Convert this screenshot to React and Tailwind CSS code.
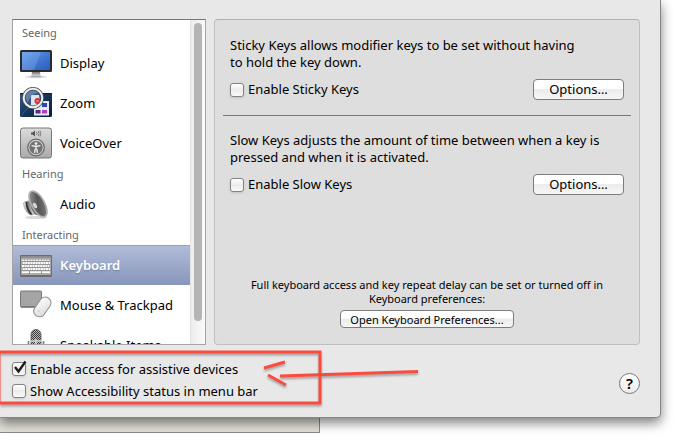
import { useState } from "react";

const DisplayIcon = () => (
  <svg viewBox="0 0 32 32" className="size-8">
    <defs>
      <linearGradient id="screen" x1="0" y1="0" x2="1" y2="1">
        <stop offset="0" stopColor="#5d9bf0" />
        <stop offset="1" stopColor="#2a5cb8" />
      </linearGradient>
      <linearGradient id="stand" x1="0" y1="0" x2="0" y2="1">
        <stop offset="0" stopColor="#777" />
        <stop offset="1" stopColor="#d8d8d8" />
      </linearGradient>
    </defs>
    <ellipse cx="16" cy="30" rx="11" ry="1.4" fill="#000" opacity=".12" />
    <path d="M12 25h8l.6 4h-9.2z" fill="url(#stand)" />
    <rect x="10.5" y="29" width="11" height="1.3" rx=".5" fill="#a5a5a5" />
    <rect x="0" y="3" width="32" height="22" rx="1.5" fill="#2b2b2d" />
    <rect x="2" y="5" width="28" height="18" fill="url(#screen)" />
    <path d="M2 5h19l-7 18H2z" fill="#fff" opacity=".13" />
  </svg>
);

const ZoomIcon = () => (
  <svg viewBox="0 0 32 32" className="size-8">
    <defs>
      <linearGradient id="desk" x1="0" y1="0" x2="1" y2="1">
        <stop offset="0" stopColor="#2e5d8c" />
        <stop offset=".5" stopColor="#14355c" />
        <stop offset="1" stopColor="#0b1e38" />
      </linearGradient>
    </defs>
    <rect x="0" y="6" width="32" height="24" rx="1.5" fill="url(#desk)" />
    <rect x="0" y="6" width="32" height="1.5" fill="#16202e" />
    <path d="M2 29c2-6 6-9 12-10" stroke="#3f7cae" strokeWidth="1" fill="none" opacity=".6" />
    <rect x="14" y="14" width="15" height="14.5" fill="#e8eaf0" />
    <rect x="22" y="16" width="5" height="4" fill="#2b46b5" />
    <rect x="15.500" y="23" width="5" height="3.5" fill="#5d2a8c" />
    <rect x="22" y="23" width="5" height="3.5" fill="#b03fc0" />
    <circle cx="13" cy="11" r="9" fill="#34557f" />
    <path d="M11 8h8l1 8-4 3h-5z" fill="#dfe5ee" />
    <path d="M5 11a8 8 0 0 1 14-5c-5 0-9 3-11 10z" fill="#7f9fc4" opacity=".6" />
    <circle cx="17.5" cy="14" r="3" fill="#d43434" />
    <path d="M16.5 13l2 2M18.5 13l-2 2" stroke="#f6b0a8" strokeWidth=".7" />
    <circle cx="13" cy="11" r="9.3" fill="none" stroke="#4b4f54" strokeWidth="3.4" />
    <circle cx="13" cy="11" r="9.3" fill="none" stroke="#eceeef" strokeWidth="2" />
  </svg>
);

const VoiceOverIcon = () => (
  <svg viewBox="0 0 32 32" className="size-8">
    <defs>
      <linearGradient id="plate" x1="0" y1="0" x2="0" y2="1">
        <stop offset="0" stopColor="#dcdcdc" />
        <stop offset="1" stopColor="#a9a9a9" />
      </linearGradient>
    </defs>
    <rect x=".5" y="1" width="31" height="30" rx="2.5" fill="url(#plate)" stroke="#777" />
    <path d="M11 5.5h1.500l2.500-2v6l-2.500-2H11z" fill="#555" />
    <path d="M16.5 5q1 1.500 0 3M18.200 4q1.800 2.500 0 5M19.900 3.500q2 3 0 6" stroke="#666" strokeWidth=".8" fill="none" />
    <circle cx="16" cy="20.5" r="8.3" fill="#d2d2d2" stroke="#666" strokeWidth="1.2" />
    <circle cx="16" cy="20.5" r="6.6" fill="#707070" />
    <circle cx="16" cy="16.6" r="1.4" fill="#eee" />
    <path d="M11.500 18.600l3.300.6h2.400l3.300-.6M16 19v3M14.500 25.800l.8-4M17.500 25.800l-.8-4" stroke="#eee" strokeWidth="1.400" fill="none" />
  </svg>
);

const AudioIcon = () => (
  <svg viewBox="0 0 32 32" className="size-8">
    <defs>
      <linearGradient id="cone" x1="0" y1="0" x2="1" y2="1">
        <stop offset="0" stopColor="#a5a5a5" />
        <stop offset=".5" stopColor="#555" />
        <stop offset="1" stopColor="#858585" />
      </linearGradient>
      <linearGradient id="magnet" x1="0" y1="0" x2="1" y2="0">
        <stop offset="0" stopColor="#f4f4f6" />
        <stop offset=".45" stopColor="#83838a" />
        <stop offset="1" stopColor="#dcdce0" />
      </linearGradient>
    </defs>
    <ellipse cx="16" cy="29.5" rx="11" ry="1.6" fill="#000" opacity=".15" />
    <path d="M3.5 15q2-2.500 6-2l5 13q-3 1.500-5 .5-5.500-4-6-11.500z" fill="url(#magnet)" stroke="#88888c" strokeWidth=".6" />
    <path d="M6.500 14q0 7 5 12.500" stroke="#2f2f34" strokeWidth="1.800" fill="none" />
    <path d="M9.500 12q.5 8 6 14.500l3 1-6-21z" fill="#4b4b4d" />
    <ellipse cx="18" cy="16" rx="6.5" ry="14.3" transform="rotate(-29 18 16)" fill="url(#cone)" stroke="#b0b0b0" strokeWidth="1.7" />
    <ellipse cx="15" cy="17.500" rx="1.800" ry="3" transform="rotate(-29 15 17.500)" fill="#d5d5d5" />
  </svg>
);

const KEY_ROWS = [13, 16, 19];

const KeyboardIcon = () => (
  <svg viewBox="0 0 32 32" className="size-8">
    <rect x="0" y="5" width="32" height="22" rx="1" fill="#6d6d6d" />
    <rect x="1" y="6" width="30" height="19" fill="#a9a9a9" />
    <rect x="1" y="6" width="30" height="2" fill="#8e8e8e" />
    <rect x="2" y="9" width="28" height="15" fill="#949494" />
    <path d="M2 10.200h28" stroke="#f2f2f2" strokeWidth="1.6" strokeDasharray="2.2 .6" />
    {KEY_ROWS.map((y) => (
      <path key={y} d={`M${2 + (y % 2) * 0.6} ${y}h27.4`} stroke="#fbfbfb" strokeWidth="2.2" strokeDasharray="2.1 .5" />
    ))}
    <path d="M2 22.300h7M10 22.300h11M22 22.300h8" stroke="#fbfbfb" strokeWidth="2" />
  </svg>
);

const MouseIcon = () => (
  <svg viewBox="0 0 32 32" className="size-8">
    <defs>
      <linearGradient id="mouse" x1="0" y1="0" x2="1" y2="1">
        <stop offset="0" stopColor="#fff" />
        <stop offset="1" stopColor="#d9d9d9" />
      </linearGradient>
    </defs>
    <rect x=".5" y="2" width="21" height="16" rx="1" fill="#a5a5a5" stroke="#777" />
    <path d="M1 18h20" stroke="#5f5f5f" />
    <rect x="16.5" y="7" width="11.5" height="21.5" rx="5.6" transform="rotate(35 22 18)" fill="url(#mouse)" stroke="#8c8c8c" />
    <circle cx="18.700" cy="22" r="1" fill="#c9d2dd" />
  </svg>
);

const MicIcon = () => (
  <svg viewBox="0 0 32 32" className="size-8">
    <defs>
      <pattern id="mesh" width="2" height="2" patternUnits="userSpaceOnUse">
        <rect width="2" height="2" fill="#3b3b3b" />
        <path d="M0 0h1v1H0zM1 1h1v1H1z" fill="#b8b8b8" />
      </pattern>
    </defs>
    <path d="M8.5 12v7q1 7 7.500 7t7.500-7v-7" fill="none" stroke="#7c7c7c" strokeWidth="1.6" />
    <rect x="11" y="0.500" width="10" height="20" rx="5" fill="url(#mesh)" stroke="#555" strokeWidth=".8" />
    <path d="M10 12h12M16 10v9" stroke="#d8d8d8" strokeWidth="1.6" />
    <path d="M16 26v4" stroke="#777" strokeWidth="2" />
  </svg>
);

const groups = [
  {
    title: "Seeing",
    items: [
      { name: "Display", Icon: DisplayIcon },
      { name: "Zoom", Icon: ZoomIcon },
      { name: "VoiceOver", Icon: VoiceOverIcon },
    ],
  },
  { title: "Hearing", items: [{ name: "Audio", Icon: AudioIcon }] },
  {
    title: "Interacting",
    items: [
      { name: "Keyboard", Icon: KeyboardIcon },
      { name: "Mouse & Trackpad", Icon: MouseIcon },
      { name: "Speakable Items", Icon: MicIcon },
    ],
  },
];

const Checkbox = ({ label, defaultChecked = false }) => {
  const [checked, setChecked] = useState(defaultChecked);

  return (
    <label className="flex items-center gap-1">
      <span className="relative size-[14px] shrink-0">
        <input
          type="checkbox"
          checked={checked}
          onChange={(e) => setChecked(e.target.checked)}
          className="block size-full appearance-none rounded-[3px] border border-[#838383] bg-linear-to-b from-white via-[#ececec] to-[#fafafa] shadow-sm"
        />
        {checked && (
          <svg viewBox="0 0 16 16" className="pointer-events-none absolute -top-0.5 left-0 size-4">
            <path d="M3 7l3.500 4.500L13.500 1.500" fill="none" stroke="#1c1c1c" strokeWidth="2.3" />
          </svg>
        )}
      </span>
      {label}
    </label>
  );
};

const PushButton = ({ children, className }) => (
  <button
    type="button"
    className={`rounded-[4px] border border-[#7d7d7d] bg-linear-to-b from-white from-45% via-[#ececec] via-50% to-[#f6f6f6] ${className}`}
  >
    {children}
  </button>
);

const KeySection = ({ text, option, className }) => (
  <section className={`px-[7px] ${className}`}>
    <p className="pr-4">{text}</p>
    <div className="mt-2 flex items-center justify-between">
      <Checkbox label={option} />
      <PushButton className="h-[21px] w-[91px]">Options…</PushButton>
    </div>
  </section>
);

const Sidebar = () => {
  const [selected, setSelected] = useState("Keyboard");

  return (
    <div className="flex w-[194px] shrink-0 border border-[#a5a5a5] border-t-[#777] bg-white">
      <nav className="min-w-0 flex-1 overflow-hidden pt-0.5">
        {groups.map((group) => (
          <div key={group.title}>
            <h2 className="px-[9px] text-[11px] leading-[21px] text-[#666]">{group.title}</h2>
            {group.items.map(({ name, Icon }) => (
              <button
                key={name}
                type="button"
                onClick={() => setSelected(name)}
                className={`flex h-10 w-full items-center gap-2 pl-[7px] whitespace-nowrap ${
                  selected === name
                    ? "border-t border-[#93a2c4] bg-linear-to-b from-[#b0bcd8] to-[#8796bb] font-semibold text-white text-shadow-sm"
                    : ""
                }`}
              >
                <Icon />
                {name}
              </button>
            ))}
          </div>
        ))}
      </nav>
      <div className="flex w-[15px] justify-center border-l border-[#e3e3e3] bg-linear-to-r from-[#ededed] to-[#fafafa] pt-[3px] pb-[23px]">
        <div className="w-2 rounded-full bg-[#b4b4b4]" />
      </div>
    </div>
  );
};

const App = () => {
  return (
    <div className="flex h-screen flex-col bg-white pb-[14px] font-['Noto_Sans','Lucida_Grande',sans-serif] text-[13px] leading-[17px] text-black">
      <main className="relative z-10 mr-[17px] flex min-h-0 flex-1 flex-col rounded-br-[5px] border-r border-b border-[#868686] bg-[#e8e8e8] pt-[19px] pr-5 pl-3 shadow-[0_5px_12px_rgba(0,0,0,0.5)]">
        <div className="flex min-h-0 flex-1 gap-2">
          <Sidebar />
          <div className="flex min-w-0 flex-1 flex-col rounded-[4px] border border-[#bfbfbf] border-t-[#b0b0b0] bg-[#dedede] px-2">
            <KeySection
              text={"Sticky Keys allows modifier keys to be set without having to\u00a0hold the key down."}
              option="Enable Sticky Keys"
              className="border-b border-[#777] pt-[17px] pb-[15px]"
            />
            <KeySection
              text="Slow Keys adjusts the amount of time between when a key is pressed and when it is activated."
              option="Enable Slow Keys"
              className="pt-4"
            />
            <div className="mt-auto flex flex-col items-center px-5 pb-4 text-center text-[11px] leading-[14px]">
              <p>Full keyboard access and key repeat delay can be set or turned off in Keyboard preferences:</p>
              <PushButton className="mt-1 h-[18px] w-[174px] leading-none">Open Keyboard Preferences...</PushButton>
            </div>
          </div>
        </div>

        <footer className="relative flex items-end justify-between pt-[13px] pb-[15px]">
          <div className="leading-[22px]">
            <Checkbox label="Enable access for assistive devices" defaultChecked />
            <Checkbox label="Show Accessibility status in menu bar" />
          </div>
          <button
            type="button"
            aria-label="Help"
            className="mb-2 flex size-[21px] items-center justify-center rounded-full border border-[#777] bg-linear-to-b from-white to-[#ececec] text-[15px] font-semibold"
          >
            ?
          </button>
          <svg
            viewBox="0 0 430 70"
            className="pointer-events-none absolute top-0 -left-3 h-[70px] w-[430px] drop-shadow-[0_2px_1px_rgba(0,0,0,0.3)]"
            fill="none"
            stroke="#fb4b3e"
          >
            <rect x="-1" y="7" width="321" height="51" strokeWidth="3" />
            <path d="M280 31L418 26.500M264 23L285 17M268 30L286 40" strokeWidth="3" />
          </svg>
        </footer>
      </main>
      <div className="h-[15px] w-80 shrink-0 border-r border-b border-[#8a8a8a] bg-[#e4e1d8]" />
    </div>
  );
};

export default App;
